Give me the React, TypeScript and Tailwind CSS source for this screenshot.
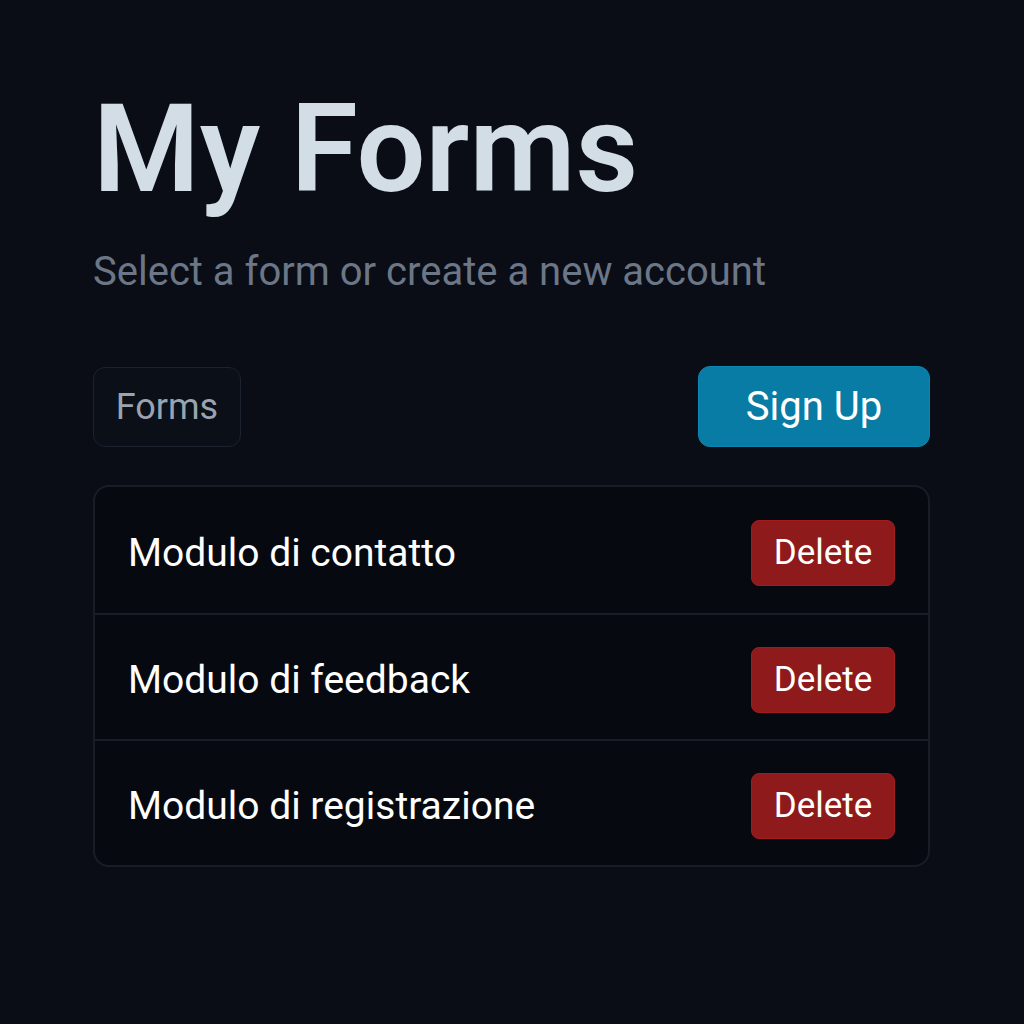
export default function App() {
  const forms = ["Modulo di contatto", "Modulo di feedback", "Modulo di registrazione"];
  return (
    <div
      className="min-h-screen w-full bg-[#0a0d16] text-white"
      style={{ fontFamily: "Roboto, 'Noto Sans', sans-serif" }}
    >
      <div className="w-[837px] ml-[93px] pt-[80px]">
        <h1 className="text-[122px] leading-[140px] font-semibold text-[#d3dde6] tracking-[0px]">
          My Forms
        </h1>
        <p className="mt-[30px] text-[40px] leading-[44px] text-[#6b7787]">
          Select a form or create a new account
        </p>
        <div className="mt-[72px] flex items-center justify-between">
          <button className="h-[80px] w-[148px] rounded-[12px] border border-[#1b2230] bg-[#0b0f18] text-[36px] text-[#9aa3ae]">
            Forms
          </button>
          <button className="h-[81px] w-[232px] rounded-[12px] border border-[#0a86b0] bg-[#087ca4] text-[40px] font-normal text-white">
            Sign Up
          </button>
        </div>
        <div className="mt-[38px] rounded-[16px] border-2 border-[#171e2a] bg-[#060910] overflow-hidden">
          {forms.map((f, i) => (
            <div
              key={f}
              className={`flex h-[126px] items-center justify-between pl-[33px] pr-[33px] pt-[6px] ${i > 0 ? "border-t-2 border-[#171e2a]" : ""}`}
            >
              <span className="text-[39px] text-white">{f}</span>
              <button className="h-[66px] w-[144px] rounded-[8px] border border-[#a11d1d] bg-[#8e1a1b] text-[35px] text-white">
                Delete
              </button>
            </div>
          ))}
        </div>
      </div>
    </div>
  );
}
